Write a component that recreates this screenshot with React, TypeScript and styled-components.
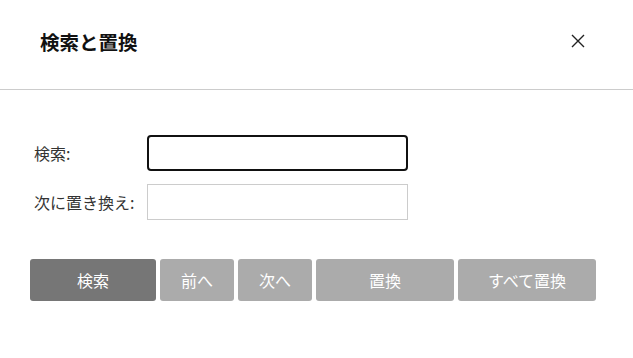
import React from "react";
import styled, { createGlobalStyle } from "styled-components";

const Global = createGlobalStyle`
  html, body { margin: 0; padding: 0; background: #fff; }
  body { font-family: "Noto Sans CJK JP", "Noto Sans", sans-serif; }
  * { box-sizing: border-box; }
`;

const Dialog = styled.div`
  width: 633px;
  height: 358px;
  background: #fff;
  display: flex;
  flex-direction: column;
`;

const Header = styled.div`
  height: 90px;
  display: flex;
  align-items: center;
  justify-content: space-between;
  padding: 0 43px 7px 40px;
  border-bottom: 1px solid #cccccc;
`;

const Title = styled.h1`
  margin: 0;
  font-size: 19.5px;
  font-weight: 700;
  color: #111;
  letter-spacing: 0;
`;

const CloseButton = styled.button`
  border: none;
  background: transparent;
  padding: 0 5px;
  display: flex;
  cursor: pointer;
`;

const Form = styled.div`
  display: grid;
  grid-template-columns: 113px 261px;
  row-gap: 13px;
  padding: 45px 0 0 34px;
  align-items: center;
`;

const Label = styled.label`
  font-size: 16px;
  color: #333;
`;

const Field = styled.input<{ $focused?: boolean }>`
  width: 261px;
  height: 36px;
  border: ${(p) => (p.$focused ? "2px solid #111" : "1px solid #cccccc")};
  border-radius: ${(p) => (p.$focused ? "4px" : "0")};
  outline: none;
  padding: 0 8px;
  font-size: 15px;
  font-family: inherit;
  background: #fff;
`;

const ButtonRow = styled.div`
  display: flex;
  gap: 4px;
  padding: 39px 0 0 30px;
`;

const ActionButton = styled.button<{ $w: number; $primary?: boolean }>`
  width: ${(p) => p.$w}px;
  height: 42px;
  border: none;
  border-radius: 3px;
  background: ${(p) => (p.$primary ? "#767676" : "#ababab")};
  color: #fff;
  font-family: inherit;
  font-size: 16px;
  padding: 0;
  cursor: pointer;
`;

export default function App() {
  return (
    <>
      <Global />
      <Dialog>
        <Header>
          <Title>検索と置換</Title>
          <CloseButton aria-label="閉じる">
            <svg width="14" height="14" viewBox="0 0 14 14">
              <path d="M1 1 L13 13 M13 1 L1 13" stroke="#222" strokeWidth="1.4" fill="none" />
            </svg>
          </CloseButton>
        </Header>
        <Form>
          <Label>検索:</Label>
          <Field $focused />
          <Label>次に置き換え:</Label>
          <Field />
        </Form>
        <ButtonRow>
          <ActionButton $w={126} $primary>検索</ActionButton>
          <ActionButton $w={74}>前へ</ActionButton>
          <ActionButton $w={74}>次へ</ActionButton>
          <ActionButton $w={138}>置換</ActionButton>
          <ActionButton $w={138}>すべて置換</ActionButton>
        </ButtonRow>
      </Dialog>
    </>
  );
}
